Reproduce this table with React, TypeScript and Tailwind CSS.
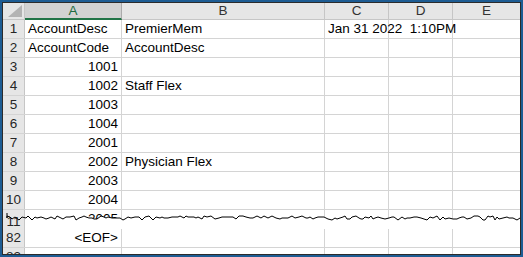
import React from "react";

type Row = {
  num: string;
  a?: string;
  aRight?: boolean;
  b?: string;
  c?: string;
};

const rows: Row[] = [
  { num: "1", a: "AccountDesc", b: "PremierMem", c: "Jan 31 2022  1:10PM" },
  { num: "2", a: "AccountCode", b: "AccountDesc" },
  { num: "3", a: "1001", aRight: true },
  { num: "4", a: "1002", aRight: true, b: "Staff Flex" },
  { num: "5", a: "1003", aRight: true },
  { num: "6", a: "1004", aRight: true },
  { num: "7", a: "2001", aRight: true },
  { num: "8", a: "2002", aRight: true, b: "Physician Flex" },
  { num: "9", a: "2003", aRight: true },
  { num: "10", a: "2004", aRight: true },
];

const cols = [
  { name: "A", w: "w-[97px]" },
  { name: "B", w: "w-[203px]" },
  { name: "C", w: "w-[64px]" },
  { name: "D", w: "w-[64px]" },
];

// torn edge across the sheet
function makeWave() {
  let seed = 7;
  const rnd = () => {
    seed = (seed * 9301 + 49297) % 233280;
    return seed / 233280;
  };
  const pts: string[] = ["4,3", "4,8"];
  let x = 4;
  while (x < 517) {
    const r = rnd();
    let y = 8;
    if (r < 0.3) y = 7;
    else if (r < 0.45) y = 9;
    else if (r < 0.55) y = 6;
    else if (r < 0.62) y = 10;
    pts.push(`${x},${y}`);
    x += 2 + Math.floor(rnd() * 3);
  }
  pts.push("517,8");
  return pts;
}

const wave = makeWave();

function Cell({
  w,
  children,
  right,
}: {
  w: string;
  children?: React.ReactNode;
  right?: boolean;
}) {
  return (
    <div
      className={`${w} shrink-0 h-full border-r border-[#d4d4d4] px-[3px] whitespace-pre overflow-visible ${
        right ? "text-right" : ""
      }`}
    >
      {children}
    </div>
  );
}

function RowHead({ n }: { n: string }) {
  return (
    <div className="w-[22px] shrink-0 h-full bg-[#e6e6e6] border-r border-[#c6c6c6] text-center text-[#262626]">
      {n}
    </div>
  );
}

function GridRow({ r }: { r: Row }) {
  return (
    <div className="flex h-[19px] border-b border-[#d4d4d4] leading-[18px]">
      <RowHead n={r.num} />
      <Cell w="w-[97px]" right={r.aRight}>
        {r.a}
      </Cell>
      <Cell w="w-[203px]">{r.b}</Cell>
      <Cell w="w-[64px]">
        <span className="relative z-10">{r.c}</span>
      </Cell>
      <Cell w="w-[64px]" />
      <div className="flex-1" />
    </div>
  );
}

export default function App() {
  return (
    <div
      className="w-[523px] h-[257px] bg-[#1d5c93] p-[2px] text-[13.5px] text-black"
      style={{ fontFamily: "'Liberation Sans', Arial, sans-serif" }}
    >
      <div className="w-full h-full border border-[#2b2b2b] bg-white overflow-hidden">
        {/* column headers */}
        <div className="flex h-[17px] leading-[15px] text-[#333]">
          <div className="w-[22px] shrink-0 h-full bg-[#e6e6e6] border-r border-b border-[#c6c6c6] relative">
            <div className="absolute right-[2px] bottom-[2px] w-[14px] h-[12px] bg-[#b3b3b3] [clip-path:polygon(100%_0,100%_100%,0_100%)]" />
          </div>
          {cols.map((c) => (
            <div
              key={c.name}
              className={`${c.w} shrink-0 h-full text-center border-r ${
                c.name === "A"
                  ? "bg-[#d2d2d2] border-r-[#ababab] border-b-2 border-b-[#217346] text-[#1e6b41]"
                  : "bg-[#e6e6e6] border-r-[#c6c6c6] border-b border-b-[#c6c6c6]"
              }`}
            >
              {c.name}
            </div>
          ))}
          <div className="flex-1 h-full text-center bg-[#e6e6e6] border-b border-[#c6c6c6]">E</div>
        </div>

        {rows.map((r) => (
          <GridRow key={r.num} r={r} />
        ))}

        {/* cut row */}
        <div className="relative h-[19px]">
          <div className="flex h-full leading-[18px]">
            <div className="w-[22px] shrink-0 h-full bg-[#e6e6e6] border-r border-[#c6c6c6] text-center text-[#262626] pt-[3px]">
              11
            </div>
            <Cell w="w-[97px]" right>
              2005
            </Cell>
            <Cell w="w-[203px]" />
            <Cell w="w-[64px]" />
            <Cell w="w-[64px]" />
            <div className="flex-1" />
          </div>
          <svg
            className="absolute left-0 top-0"
            width="517"
            height="19"
            viewBox="0 0 517 19"
          >
            <polygon
              points={`${wave.slice(2).filter((p) => Number(p.split(",")[0]) >= 23).join(" ")} 517,19 23,19`}
              fill="#ffffff"
            />
            <polyline
              points={wave.join(" ")}
              fill="none"
              stroke="#000"
              strokeWidth="1"
            />
          </svg>
        </div>

        <GridRow r={{ num: "82", a: "<EOF>", aRight: true }} />
        <GridRow r={{ num: "83" }} />
      </div>
    </div>
  );
}
